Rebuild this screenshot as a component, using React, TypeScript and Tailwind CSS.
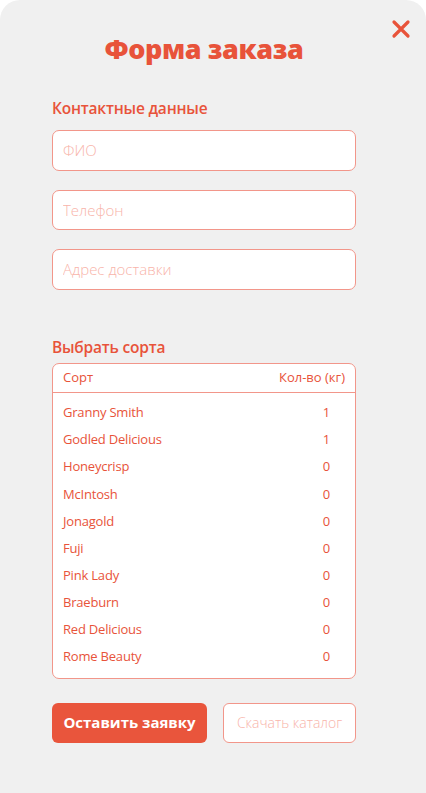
import React from "react";

const sorts: [string, number][] = [
  ["Granny Smith", 1],
  ["Godled Delicious", 1],
  ["Honeycrisp", 0],
  ["McIntosh", 0],
  ["Jonagold", 0],
  ["Fuji", 0],
  ["Pink Lady", 0],
  ["Braeburn", 0],
  ["Red Delicious", 0],
  ["Rome Beauty", 0],
];

export default function App() {
  return (
    <div className="w-[426px] h-[793px] bg-white overflow-hidden" style={{ fontFamily: '"Open Sans", "Noto Sans", sans-serif' }}>
      <div className="relative h-[793px] bg-[#f0f0f0] rounded-t-[20px] pl-[52px] pr-[70px] pt-[30px]">
        <button className="absolute right-[15px] top-[19px] w-[20px] h-[20px] flex items-center justify-center">
          <svg width="20" height="20" viewBox="0 0 20 20">
            <path d="M3 3 L17 17 M17 3 L3 17" stroke="#e8533a" strokeWidth="3.2" strokeLinecap="round" />
          </svg>
        </button>
        <h1 className="text-center text-[27px] leading-[38px] font-extrabold text-[#e8533a] tracking-[-0.4px]">Форма заказа</h1>
        <h2 className="mt-[29px] text-[15.5px] leading-[22px] font-semibold text-[#e8533a] tracking-[-0.2px]">Контактные данные</h2>
        <div className="mt-[11px] flex flex-col gap-[19px]">
          {["ФИО", "Телефон", "Адрес доставки"].map((p) => (
            <input
              key={p}
              placeholder={p}
              className="h-[40.5px] w-full rounded-[7px] border border-[#f2968a] bg-white px-[10px] text-[15px] font-light text-[#e8533a] placeholder:text-[#f8b4aa] outline-none"
            />
          ))}
        </div>
        <h2 className="mt-[46px] text-[15.5px] leading-[22px] font-semibold text-[#e8533a] tracking-[-0.2px]">Выбрать сорта</h2>
        <div className="mt-[5px] rounded-[7px] border border-[#f2968a] bg-white h-[316px]">
          <div className="h-[29px] flex items-center justify-between px-[10px] border-b border-[#f2968a] text-[13px] text-[#e8533a]">
            <span>Сорт</span>
            <span>Кол-во (кг)</span>
          </div>
          <div className="pt-[7px]">
            {sorts.map(([n, q]) => (
              <div key={n} className="h-[27.1px] flex items-center justify-between pl-[10px] pr-[25px] text-[13px] text-[#e8533a] tracking-[-0.2px]">
                <span>{n}</span>
                <span>{q}</span>
              </div>
            ))}
          </div>
        </div>
        <div className="mt-[24px] flex gap-[16px]">
          <button className="h-[40px] w-[155px] rounded-[6px] bg-[#e9553c] text-white text-[15px] font-bold">Оставить заявку</button>
          <button className="h-[40px] flex-1 rounded-[6px] border border-[#f2968a] bg-white text-[#f8b4aa] text-[14px] font-light">Скачать каталог</button>
        </div>
      </div>
    </div>
  );
}
